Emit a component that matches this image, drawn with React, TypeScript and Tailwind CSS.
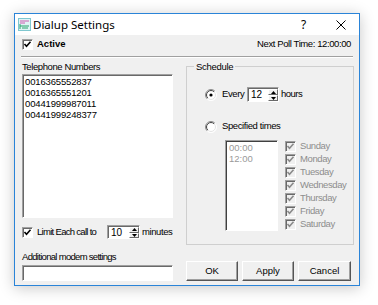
import React from "react";

const FONT = { fontFamily: '"Liberation Sans", Arial, sans-serif' };

function Check({ disabled = false }: { disabled?: boolean }) {
  return (
    <div
      className={
        disabled
          ? "w-[11px] h-[11px] shrink-0 box-border border border-t-[#a0a0a0] border-l-[#a0a0a0] border-b-white border-r-white shadow-[inset_1px_1px_0_#696969] bg-[#f0f0f0] flex items-center justify-center"
          : "w-[11px] h-[11px] shrink-0 box-border border border-t-[#a0a0a0] border-l-[#a0a0a0] border-b-white border-r-white shadow-[inset_1px_1px_0_#696969] bg-white flex items-center justify-center"
      }
    >
      <svg width="9" height="9" viewBox="0 0 9 9">
        <polyline
          points="1.5,4 3.5,6.2 7.5,1.8"
          fill="none"
          stroke={disabled ? "#8a8a8a" : "#000"}
          strokeWidth="1.6"
        />
      </svg>
    </div>
  );
}

function Radio({ checked }: { checked?: boolean }) {
  return (
    <svg width="12" height="12" viewBox="0 0 12 12" className="shrink-0">
      <defs>
        <linearGradient id="rg" x1="0" y1="0" x2="1" y2="1">
          <stop offset="0.45" stopColor="#8a8a8a" />
          <stop offset="0.55" stopColor="#ffffff" />
        </linearGradient>
        <linearGradient id="rg2" x1="0" y1="0" x2="1" y2="1">
          <stop offset="0.45" stopColor="#404040" />
          <stop offset="0.55" stopColor="#e3e3e3" />
        </linearGradient>
      </defs>
      <circle cx="6" cy="6" r="5.5" fill="#fff" stroke="url(#rg)" strokeWidth="1" />
      <circle cx="6" cy="6" r="4.5" fill="#fff" stroke="url(#rg2)" strokeWidth="1" />
      {checked && <circle cx="6" cy="6" r="1.6" fill="#000" />}
    </svg>
  );
}

function Spin({ value }: { value: string }) {
  return (
    <div className="flex h-full w-full box-border border border-t-[#a0a0a0] border-l-[#a0a0a0] border-b-white border-r-white shadow-[inset_1px_1px_0_#696969] bg-white">
      <div className="flex-1 pl-[3px] pt-[1px] text-[10px] leading-[12px]">{value}</div>
      <div className="w-[10px] flex flex-col pt-[1px]">
        <div className="flex-1 bg-[#f0f0f0] border-t border-l border-t-white border-l-white border-b border-r border-b-[#696969] border-r-[#696969] flex items-center justify-center">
          <svg width="5" height="3" viewBox="0 0 5 3">
            <polygon points="2.5,0 5,3 0,3" fill="#000" />
          </svg>
        </div>
        <div className="flex-1 bg-[#f0f0f0] border-t border-l border-t-white border-l-white border-b border-r border-b-[#696969] border-r-[#696969] flex items-center justify-center">
          <svg width="5" height="3" viewBox="0 0 5 3">
            <polygon points="0,0 5,0 2.5,3" fill="#000" />
          </svg>
        </div>
      </div>
    </div>
  );
}

function Btn({ label, w }: { label: string; w: string }) {
  return (
    <div
      className={
        w +
        " h-[20px] box-border bg-[#f0f0f0] border border-t-white border-l-white border-b-[#555] border-r-[#555] shadow-[inset_-1px_-1px_0_#a0a0a0] flex items-center justify-center text-[9.5px] text-black"
      }
    >
      {label}
    </div>
  );
}

const days = ["Sunday", "Monday", "Tuesday", "Wednesday", "Thursday", "Friday", "Saturday"];

export default function App() {
  return (
    <div className="w-[378px] h-[305px] bg-white pt-[13px] pl-[14px] overflow-hidden" style={FONT}>
      <div className="w-[346px] h-[273px] box-border border border-[#2a84d8] shadow-[0_2px_14px_rgba(0,0,0,0.22)] flex flex-col">
        {/* title bar */}
        <div className="h-[21px] bg-white flex items-center">
          <svg width="13" height="13" viewBox="0 0 13 13" className="ml-[3px]">
            <rect x="0.5" y="0.5" width="12" height="12" fill="#dff3f6" stroke="#7fc7cf" />
            <line x1="2" y1="3" x2="11" y2="3" stroke="#d05ab0" strokeWidth="1" />
            <line x1="2" y1="5" x2="7" y2="5" stroke="#d05ab0" strokeWidth="1" />
            <line x1="2" y1="8" x2="11" y2="8" stroke="#29a36a" strokeWidth="1" />
            <line x1="4" y1="10" x2="10" y2="10" stroke="#29a36a" strokeWidth="1" />
            <line x1="2" y1="6" x2="2" y2="11" stroke="#29a36a" strokeWidth="1" />
          </svg>
          <div
            className="ml-[2px] text-[11.5px] text-black"
            style={{ fontFamily: '"Noto Sans", "Open Sans", sans-serif' }}
          >
            Dialup Settings
          </div>
          <div className="flex-1" />
          <div
            className="w-[37px] h-full flex items-center justify-center text-[12px] text-black"
            style={{ fontFamily: '"Noto Sans", sans-serif' }}
          >
            ?
          </div>
          <div className="w-[37px] h-full flex items-center justify-center">
            <svg width="10" height="10" viewBox="0 0 10 10">
              <line x1="0.5" y1="0.5" x2="9.5" y2="9.5" stroke="#000" strokeWidth="1" />
              <line x1="9.5" y1="0.5" x2="0.5" y2="9.5" stroke="#000" strokeWidth="1" />
            </svg>
          </div>
        </div>

        {/* client */}
        <div className="flex-1 bg-[#f0f0f0] flex flex-col text-[9.5px] text-black whitespace-nowrap">
          <div className="mt-[3px] h-[13px] pl-[7px] pr-[8px] flex items-center">
            <Check />
            <div className="ml-[4px] font-bold">Active</div>
            <div className="flex-1" />
            <div className="tracking-[-0.4px]">Next Poll Time: 12:00:00</div>
          </div>
          <div className="mt-[5px] mx-[6px] h-[2px] border-t border-t-[#a0a0a0] border-b border-b-white" />

          <div className="flex">
            {/* left column */}
            <div className="ml-[7px] w-[151px] flex flex-col">
              <div className="mt-[2px] h-[13px] leading-[13px] tracking-[-0.4px]">Telephone Numbers</div>
              <div className="mt-[1px] h-[144px] box-border border border-t-[#a0a0a0] border-l-[#a0a0a0] border-b-white border-r-white shadow-[inset_1px_1px_0_#696969] bg-white pl-[2px] pt-[1px] leading-[11px] tracking-[-0.15px]">
                <div>0016365552837</div>
                <div>0016365551201</div>
                <div>00441999987011</div>
                <div>00441999248377</div>
              </div>
              <div className="mt-[7px] h-[14px] flex items-center">
                <Check />
                <div className="ml-[4px] w-[66px] tracking-[-0.7px]">Limit Each call to</div>
                <div className="ml-[4px] w-[33px] h-[14px]">
                  <Spin value="10" />
                </div>
                <div className="ml-[2px] tracking-[-0.4px]">minutes</div>
              </div>
              <div className="mt-[11px] h-[13px] leading-[13px] tracking-[-0.7px]">Additional modem settings</div>
              <div className="mt-[2px] h-[16px] box-border border border-t-[#a0a0a0] border-l-[#a0a0a0] border-b-white border-r-white shadow-[inset_1px_1px_0_#696969] bg-white" />
            </div>

            {/* right column */}
            <div className="ml-[13px] w-[166px] flex flex-col">
              <fieldset className="mt-[2px] h-[185px] box-border border border-[#cfcfcf] px-[7px] pt-[14px]">
                <legend className="px-[2px] h-[13px] leading-[13px] tracking-[-0.3px]">Schedule</legend>
                <div className="h-[15px] flex items-center pl-[11px]">
                  <Radio checked />
                  <div className="ml-[5px] w-[22px] tracking-[-0.4px]">Every</div>
                  <div className="ml-[3px] w-[32px] h-[15px]">
                    <Spin value="12" />
                  </div>
                  <div className="ml-[2px] tracking-[-0.5px]">hours</div>
                </div>
                <div className="mt-[18px] h-[13px] flex items-center pl-[11px]">
                  <Radio />
                  <div className="ml-[5px] tracking-[-0.4px]">Specified times</div>
                </div>
                <div className="mt-[7px] flex pl-[31px]">
                  <div className="w-[53px] h-[91px] box-border border border-t-[#a0a0a0] border-l-[#a0a0a0] border-b-white border-r-white shadow-[inset_1px_1px_0_#404040] bg-white pl-[3px] pt-[1px] leading-[11px] text-[#9a9a9a]">
                    <div>00:00</div>
                    <div>12:00</div>
                  </div>
                  <div className="ml-[7px] flex flex-col">
                    {days.map((d) => (
                      <div key={d} className="h-[13px] flex items-center">
                        <Check disabled />
                        <div className="ml-[4px] text-[#8d8d8d] tracking-[-0.4px]">{d}</div>
                      </div>
                    ))}
                  </div>
                </div>
              </fieldset>
              <div className="mt-[16px] flex gap-[4px]">
                <Btn label="OK" w="w-[52px]" />
                <Btn label="Apply" w="w-[52px]" />
                <Btn label="Cancel" w="w-[53px]" />
              </div>
            </div>
          </div>
        </div>
      </div>
    </div>
  );
}
